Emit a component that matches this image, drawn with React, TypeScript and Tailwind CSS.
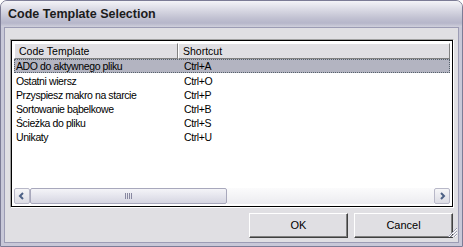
const rows: [string, string][] = [
  ['ADO do aktywnego pliku', 'Ctrl+A'],
  ['Ostatni wiersz', 'Ctrl+O'],
  ['Przyspiesz makro na starcie', 'Ctrl+P'],
  ['Sortowanie bąbelkowe', 'Ctrl+B'],
  ['Ścieżka do pliku', 'Ctrl+S'],
  ['Unikaty', 'Ctrl+U'],
]

function Chevron({ dir }: { dir: 'left' | 'right' }) {
  return (
    <svg width="8" height="8" viewBox="0 0 8 8" className="block">
      {dir === 'left' ? (
        <path d="M5 1 L2 4 L5 7" stroke="#4d6185" strokeWidth="2" fill="none" />
      ) : (
        <path d="M3 1 L6 4 L3 7" stroke="#4d6185" strokeWidth="2" fill="none" />
      )}
    </svg>
  )
}

function XpButton({ label }: { label: string }) {
  return (
    <button className="w-[99px] h-[25px] bg-[#e0dfe3] border border-t-white border-l-white border-r-[#404040] border-b-[#404040] shadow-[inset_-1px_-1px_0_#808080] text-[11px] text-black">
      {label}
    </button>
  )
}

export default function App() {
  return (
    <div
      className="w-[463px] h-[247px] flex flex-col bg-[#e0dfe3] border border-[#7c7c96] rounded-t-[7px] overflow-hidden"
      style={{ fontFamily: '"Liberation Sans", Arial, sans-serif' }}
    >
      {/* title bar */}
      <div className="h-[26px] flex items-center pl-[7px] bg-[linear-gradient(to_bottom,#f4f4f8_0%,#dcdce6_30%,#c2c2d2_65%,#b6b6ca_85%,#d0d0dc_100%)]">
        <span className="text-[12.5px] font-bold text-[#1c1c1c]">Code Template Selection</span>
      </div>

      {/* window body with frame */}
      <div className="flex-1 flex flex-col border-x-[3px] border-b-[3px] border-[#c8c8d8]">
        <div className="flex-1 flex flex-col border border-[#9c9cb4] pl-[5px] pr-[4px] pt-[11px] pb-[5px]">
          {/* list view */}
          <div className="h-[169px] flex flex-col border border-t-[#a0a0a0] border-l-[#a0a0a0] border-r-white border-b-white">
            <div className="flex-1 flex flex-col border border-black bg-white p-[2px]">
              {/* header */}
              <div className="flex h-[16px] text-[10.5px] text-black leading-[13px]">
                <div className="w-[164px] bg-[#e0dfe3] border border-t-white border-l-white border-r-[#808080] border-b-[#808080] pl-[4px] pt-[1px]">
                  Code Template
                </div>
                <div className="flex-1 bg-[#e0dfe3] border border-t-white border-l-white border-r-[#808080] border-b-[#808080] pl-[4px] pt-[1px]">
                  Shortcut
                </div>
              </div>
              {/* rows */}
              <div className="flex-1 flex flex-col text-[10.5px] tracking-[-0.4px] text-black">
                {rows.map(([name, key], i) => (
                  <div
                    key={name}
                    className={
                      i === 0
                        ? 'flex h-[14px] leading-[12px] bg-[#b3b4c1] border border-dotted border-[#55606a]'
                        : 'flex h-[14px] leading-[14px] border border-transparent'
                    }
                  >
                    <div className="w-[168px] pl-[1px]">{name}</div>
                    <div className="flex-1 pl-[1px]">{key}</div>
                  </div>
                ))}
              </div>
              {/* horizontal scrollbar */}
              <div className="h-[16px] flex">
                <div className="w-[16px] flex items-center justify-center bg-[linear-gradient(to_bottom,#f6f6f8,#dcdce4)] border border-[#b8b8c8] rounded-[2px]">
                  <Chevron dir="left" />
                </div>
                <div className="w-[197px] flex items-center justify-center bg-[linear-gradient(to_bottom,#f4f4f8,#d6d6e2)] border border-[#a8a8bc] rounded-[2px]">
                  <div className="flex gap-[1px]">
                    <div className="w-[1px] h-[6px] bg-[#8888a0]" />
                    <div className="w-[1px] h-[6px] bg-[#8888a0]" />
                    <div className="w-[1px] h-[6px] bg-[#8888a0]" />
                    <div className="w-[1px] h-[6px] bg-[#8888a0]" />
                  </div>
                </div>
                <div className="flex-1 bg-[linear-gradient(to_bottom,#fbfbfc,#ececf0)]" />
                <div className="w-[16px] flex items-center justify-center bg-[linear-gradient(to_bottom,#f6f6f8,#dcdce4)] border border-[#b8b8c8] rounded-[2px]">
                  <Chevron dir="right" />
                </div>
              </div>
            </div>
          </div>

          {/* buttons */}
          <div className="flex justify-end gap-[6px] mt-[5px] pr-[1px]">
            <XpButton label="OK" />
            <XpButton label="Cancel" />
          </div>
          <svg width="11" height="11" viewBox="0 0 11 11" className="self-end -mt-[11px] -mr-[4px] -mb-[5px]">
            <path d="M10 1 L1 10 M10 4 L4 10 M10 7 L7 10" stroke="#9c9cb0" strokeWidth="1" />
            <path d="M10 2 L2 10 M10 5 L5 10 M10 8 L8 10" stroke="#ffffff" strokeWidth="1" />
          </svg>
        </div>
      </div>
    </div>
  )
}
